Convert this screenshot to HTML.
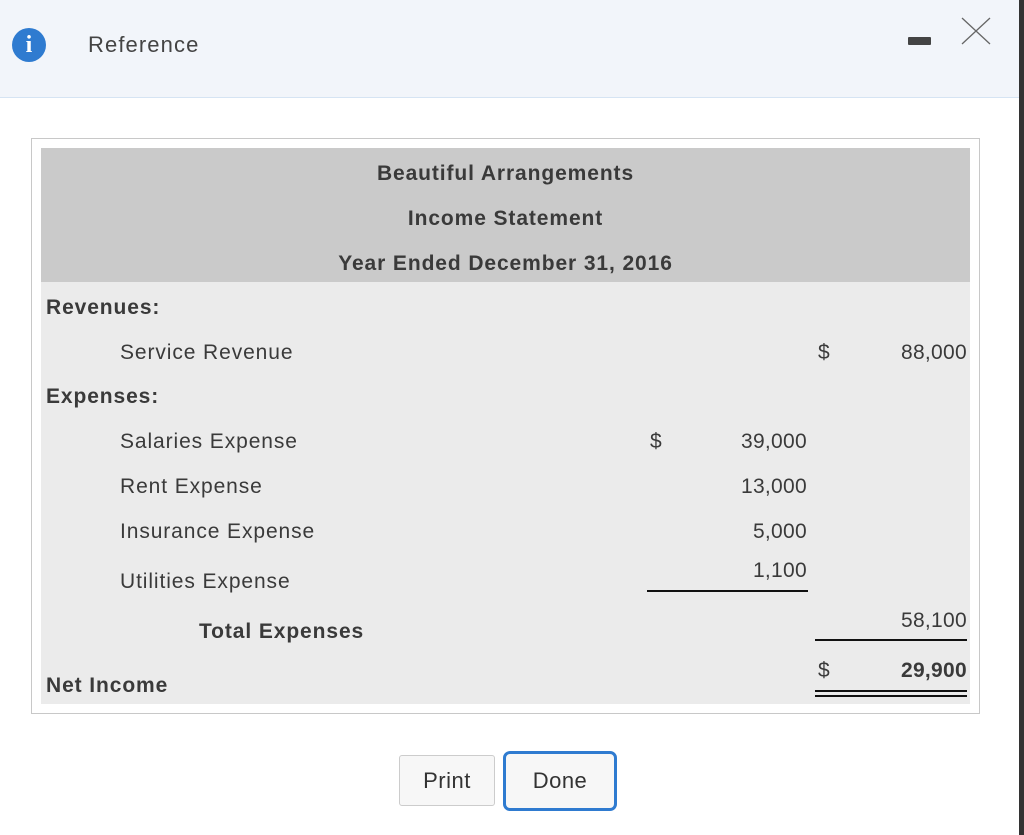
<!DOCTYPE html>
<html><head><style>
body{margin:0;width:1024px;height:835px;position:relative;background:#fff;font-family:"Liberation Sans",sans-serif;color:#3a3a3a;overflow:hidden}
.a{position:absolute;white-space:nowrap;font-size:21px;line-height:24px;letter-spacing:0.9px}
.b{font-weight:bold}
.r{text-align:right}
.l{position:absolute;background:#111;height:2px}
</style></head><body>
<div style="position:absolute;left:0;top:0;width:1024px;height:97px;background:#f2f5fa;border-bottom:1px solid #d6e4f3"></div>
<div style="position:absolute;left:1019px;top:0;width:5px;height:835px;background:#333"></div>
<div style="position:absolute;left:12px;top:28px;width:34px;height:34px;border-radius:50%;background:#2f7bd0;color:#fff;font:bold 24px/34px 'Liberation Serif',serif;text-align:center">i</div>
<div class="a" style="left:88px;top:33px;color:#444;font-size:22px;letter-spacing:1.1px">Reference</div>
<div style="position:absolute;left:908px;top:37px;width:23px;height:8px;background:#444;border-radius:1px"></div>
<svg style="position:absolute;left:960px;top:16px" width="32" height="30"><path d="M2 2L30 28M30 2L2 28" stroke="#666" stroke-width="1.3" fill="none"/></svg>
<div style="position:absolute;left:31px;top:138px;width:947px;height:574px;border:1px solid #c8c8c8"></div>
<div style="position:absolute;left:41px;top:148px;width:929px;height:134px;background:#cacaca"></div>
<div style="position:absolute;left:41px;top:282px;width:929px;height:422px;background:#ebebeb"></div>
<div class="a b" style="left:41px;width:929px;text-align:center;top:162px">Beautiful Arrangements</div>
<div class="a b" style="left:41px;width:929px;text-align:center;top:207px">Income Statement</div>
<div class="a b" style="left:41px;width:929px;text-align:center;top:252px">Year Ended December 31, 2016</div>
<div class="a b" style="left:46px;top:296px">Revenues:</div>
<div class="a" style="left:120px;top:341px">Service Revenue</div>
<div class="a" style="left:818px;top:341px">$</div>
<div class="a r" style="left:850px;width:117px;top:341px;letter-spacing:0.3px">88,000</div>
<div class="a b" style="left:46px;top:385px">Expenses:</div>
<div class="a" style="left:120px;top:430px">Salaries Expense</div>
<div class="a" style="left:650px;top:430px">$</div>
<div class="a r" style="left:690px;width:117px;top:430px;letter-spacing:0.3px">39,000</div>
<div class="a" style="left:120px;top:475px">Rent Expense</div>
<div class="a r" style="left:690px;width:117px;top:475px;letter-spacing:0.3px">13,000</div>
<div class="a" style="left:120px;top:520px">Insurance Expense</div>
<div class="a r" style="left:690px;width:117px;top:520px;letter-spacing:0.3px">5,000</div>
<div class="a" style="left:120px;top:570px">Utilities Expense</div>
<div class="a r" style="left:690px;width:117px;top:559px;letter-spacing:0.3px">1,100</div>
<div class="l" style="left:647px;top:590px;width:161px"></div>
<div class="a b" style="left:199px;top:620px">Total Expenses</div>
<div class="a r" style="left:850px;width:117px;top:609px;letter-spacing:0.3px">58,100</div>
<div class="l" style="left:815px;top:639px;width:152px"></div>
<div class="a" style="left:818px;top:659px">$</div>
<div class="a b r" style="left:850px;width:117px;top:659px;letter-spacing:0.3px">29,900</div>
<div class="l" style="left:815px;top:690px;width:152px"></div>
<div class="l" style="left:815px;top:695px;width:152px"></div>
<div class="a b" style="left:46px;top:674px">Net Income</div>
<div style="position:absolute;left:399px;top:755px;width:96px;height:51px;border:1px solid #ccc;border-radius:3px;background:#f7f7f7;box-sizing:border-box;text-align:center;font-size:22px;line-height:49px;color:#333;letter-spacing:0.5px">Print</div>
<div style="position:absolute;left:503px;top:751px;width:114px;height:60px;border:3px solid #2f7bd0;border-radius:7px;background:#f7f7f7;box-sizing:border-box;text-align:center;font-size:22px;line-height:54px;color:#333;letter-spacing:0.5px">Done</div>
</body></html>
